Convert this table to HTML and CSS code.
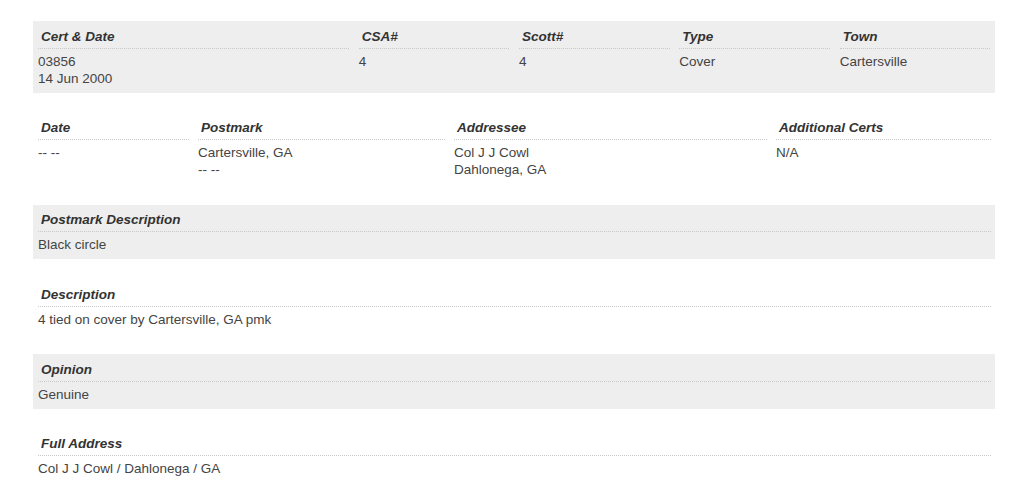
FILE: index.html
```html
<!DOCTYPE html>
<html>
<head>
<meta charset="utf-8">
<link rel="stylesheet" href="styles.css">
</head>
<body>
<div class="page">
  <div class="section shaded grid-five">
    <div class="field"><div class="label">Cert &amp; Date</div><div class="value">03856<br>14 Jun 2000</div></div>
    <div class="field"><div class="label">CSA#</div><div class="value">4</div></div>
    <div class="field"><div class="label">Scott#</div><div class="value">4</div></div>
    <div class="field"><div class="label">Type</div><div class="value">Cover</div></div>
    <div class="field"><div class="label">Town</div><div class="value">Cartersville</div></div>
  </div>
  <div class="section grid-four">
    <div class="field"><div class="label">Date</div><div class="value">-- --</div></div>
    <div class="field"><div class="label">Postmark</div><div class="value">Cartersville, GA<br>-- --</div></div>
    <div class="field"><div class="label">Addressee</div><div class="value">Col J J Cowl<br>Dahlonega, GA</div></div>
    <div class="field"><div class="label">Additional Certs</div><div class="value">N/A</div></div>
  </div>
  <div class="section shaded">
    <div class="field"><div class="label">Postmark Description</div><div class="value">Black circle</div></div>
  </div>
  <div class="section">
    <div class="field"><div class="label">Description</div><div class="value">4 tied on cover by Cartersville, GA pmk</div></div>
  </div>
  <div class="section shaded">
    <div class="field"><div class="label">Opinion</div><div class="value">Genuine</div></div>
  </div>
  <div class="section">
    <div class="field"><div class="label">Full Address</div><div class="value">Col J J Cowl / Dahlonega / GA</div></div>
  </div>
</div>
</body>
</html>
```
FILE: styles.css
```css
html, body {
  margin: 0;
  padding: 0;
  background: #fff;
}
body {
  font-family: "Liberation Sans", Arial, sans-serif;
  font-size: 13.5px;
  line-height: 17px;
  color: #444;
}
.page {
  width: 962px;
  margin: 21px 0 0 33px;
  display: flex;
  flex-direction: column;
  gap: 20.3px;
}
.section {
  padding: 6.5px 0 6px;
}
.shaded {
  background: #eeeeee;
}
.grid-five {
  display: grid;
  grid-template-columns: 2fr 1fr 1fr 1fr 1fr;
}
.grid-four {
  display: grid;
  grid-template-columns: 160px 256px 322px 224px;
}
.field {
  padding: 0 4.5px 0 5px;
}
.label {
  font-weight: bold;
  font-style: italic;
  color: #333;
  padding: 0 0 3px 3px;
  border-bottom: 1px dotted #c8c8c8;
}
.value {
  margin-top: 4px;
  color: #444;
}
```
